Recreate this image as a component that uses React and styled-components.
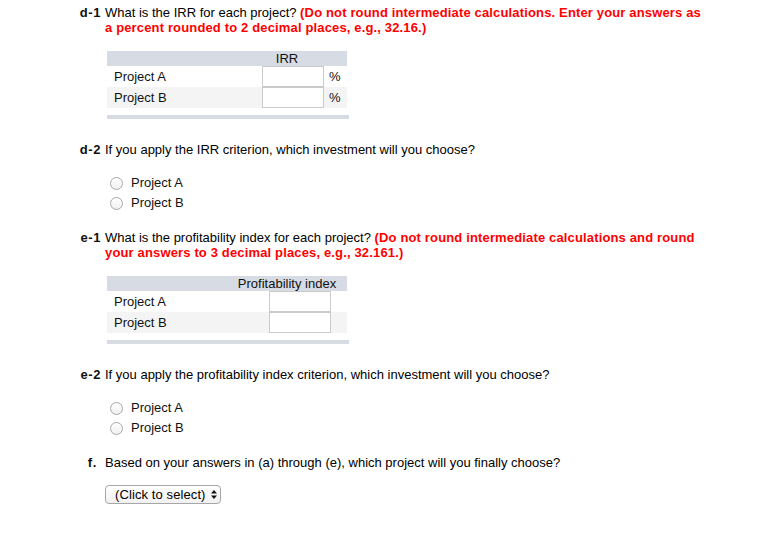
import React from "react";
import styled, { createGlobalStyle } from "styled-components";

const GlobalStyle = createGlobalStyle`
  html, body { margin: 0; padding: 0; background: #fff; }
  body {
    font-family: "Liberation Sans", Arial, Helvetica, sans-serif;
    font-size: 13px;
    line-height: 15px;
    color: #000;
  }
`;

const Page = styled.div`
  width: 770px;
  min-height: 533px;
  padding-top: 5px;
  box-sizing: border-box;
`;

const Question = styled.section`
  display: grid;
  grid-template-columns: 25px 600px;
  column-gap: 4px;
  padding-left: 76px;
  margin-top: ${(p) => p.$mt || 0}px;
`;

const Label = styled.div`
  font-weight: bold;
  letter-spacing: 0.6px;
  text-align: right;
  padding-right: ${(p) => p.$pr || 0}px;
  color: #111;
`;

const Body = styled.div`
  display: flex;
  flex-direction: column;
  align-items: flex-start;
`;

const Prompt = styled.p`
  margin: 0;
  color: #000;
`;

const Note = styled.strong`
  color: #f00;
  font-weight: bold;
  letter-spacing: 0.15px;
`;

const Table = styled.div`
  margin: 16px 0 0 2px;
  width: 240px;
`;

const TRow = styled.div`
  display: grid;
  grid-template-columns: ${(p) => p.$cols};
  height: ${(p) => (p.$head ? 15 : 21)}px;
  align-items: center;
  background: ${(p) => (p.$head ? "#d6dbe4" : p.$alt ? "#f4f4f4" : "#fff")};
  color: #111;
`;

const RowLabel = styled.div`
  padding-left: 7px;
`;

const HeadCell = styled.div`
  text-align: center;
  white-space: nowrap;
`;

const InputCell = styled.div`
  display: flex;
  justify-content: flex-end;
  align-self: stretch;
  padding-right: ${(p) => p.$pr || 0}px;
`;

const Field = styled.input`
  width: 62px;
  height: 21px;
  box-sizing: border-box;
  margin: 0;
  padding: 0 3px;
  border: 1px solid #cbcbcb;
  background: #fff;
  font: inherit;
  outline: none;
`;

const Unit = styled.div`
  padding-left: 5px;
`;

const Bar = styled.div`
  width: 242px;
  height: 4px;
  margin: 7px 0 0 2px;
  background: #d6dbe4;
`;

const Choices = styled.div`
  margin: 15px 0 0 5px;
  display: flex;
  flex-direction: column;
`;

const Choice = styled.label`
  display: flex;
  align-items: center;
  height: 20px;
  color: #111;
`;

const Radio = styled.input.attrs({ type: "radio" })`
  appearance: none;
  -webkit-appearance: none;
  width: 13px;
  height: 13px;
  margin: 2px 8px 0 0;
  box-sizing: border-box;
  border: 1px solid #a8a8a8;
  border-radius: 50%;
  background: linear-gradient(#ffffff, #f0f0f0);
  box-shadow: inset 0 1px 0 #fff;
`;

const SelectBox = styled.button`
  margin-top: 15px;
  width: 116px;
  height: 19px;
  box-sizing: border-box;
  display: flex;
  align-items: center;
  justify-content: space-between;
  padding: 0 3px 0 9px;
  border: 1px solid #a6a6a6;
  border-radius: 4px;
  background: linear-gradient(#ffffff, #f1f1f1);
  font: inherit;
  letter-spacing: 0.1px;
  color: #000;
  cursor: pointer;
`;

const Arrows = () => (
  <svg width="6" height="9" viewBox="0 0 6 9" aria-hidden="true">
    <polygon points="0,3.6 3,0 6,3.6" fill="#111" />
    <polygon points="0,5.4 6,5.4 3,9" fill="#111" />
  </svg>
);

const DataTable = ({ cols, head, unit, inputPad }) => (
  <>
    <Table>
      <TRow $head $cols={cols}>
        <div />
        <HeadCell>{head}</HeadCell>
        <div />
      </TRow>
      {["Project A", "Project B"].map((name, i) => (
        <TRow key={name} $alt={i === 1} $cols={cols}>
          <RowLabel>{name}</RowLabel>
          <InputCell $pr={inputPad}>
            <Field type="text" aria-label={`${name} ${head}`} />
          </InputCell>
          <Unit>{unit}</Unit>
        </TRow>
      ))}
    </Table>
    <Bar />
  </>
);

const RadioGroup = ({ name }) => (
  <Choices>
    <Choice>
      <Radio name={name} />
      Project A
    </Choice>
    <Choice>
      <Radio name={name} />
      Project B
    </Choice>
  </Choices>
);

export default function App() {
  return (
    <Page>
      <GlobalStyle />
      <Question>
        <Label>d-1</Label>
        <Body>
          <Prompt>
            What is the IRR for each project?{" "}
            <Note>
              (Do not round intermediate calculations. Enter your answers as a
              percent rounded to 2 decimal places, e.g., 32.16.)
            </Note>
          </Prompt>
          <DataTable cols="143px 74px 1fr" head="IRR" unit="%" inputPad={0} />
        </Body>
      </Question>

      <Question $mt={23}>
        <Label>d-2</Label>
        <Body>
          <Prompt>
            If you apply the IRR criterion, which investment will you choose?
          </Prompt>
          <RadioGroup name="d2" />
        </Body>
      </Question>

      <Question $mt={18}>
        <Label>e-1</Label>
        <Body>
          <Prompt>
            What is the profitability index for each project?{" "}
            <Note>
              (Do not round intermediate calculations and round your answers to
              3 decimal places, e.g., 32.161.)
            </Note>
          </Prompt>
          <DataTable
            cols="130px 100px 1fr"
            head="Profitability index"
            unit=""
            inputPad={6}
          />
        </Body>
      </Question>

      <Question $mt={23}>
        <Label>e-2</Label>
        <Body>
          <Prompt>
            If you apply the profitability index criterion, which investment
            will you choose?
          </Prompt>
          <RadioGroup name="e2" />
        </Body>
      </Question>

      <Question $mt={18}>
        <Label $pr={4}>f.</Label>
        <Body>
          <Prompt>
            Based on your answers in (a) through (e), which project will you
            finally choose?
          </Prompt>
          <SelectBox type="button">
            (Click to select)
            <Arrows />
          </SelectBox>
        </Body>
      </Question>
    </Page>
  );
}
